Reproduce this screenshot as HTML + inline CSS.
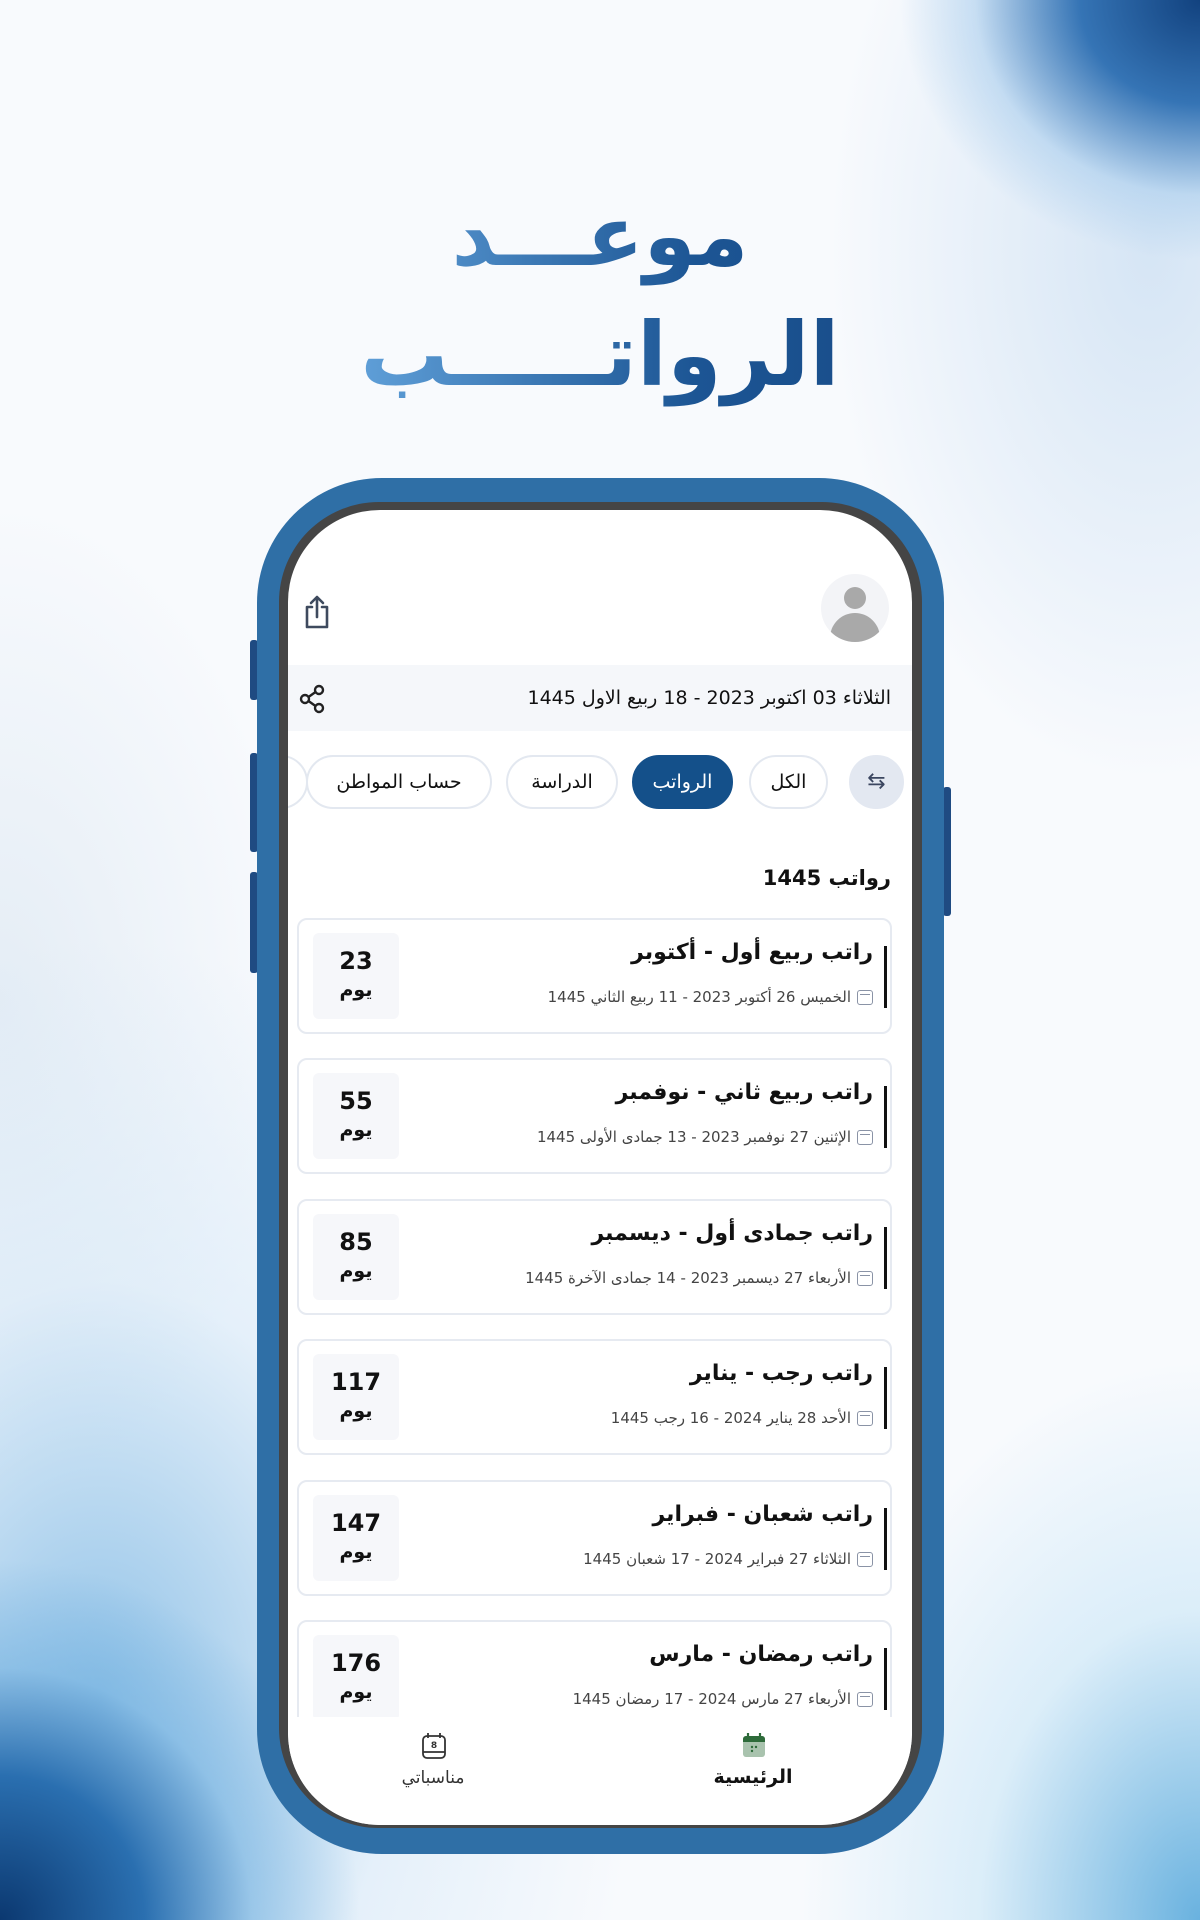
<!DOCTYPE html>
<html><head><meta charset="utf-8"><style>
*{margin:0;padding:0;box-sizing:border-box}
body{width:1200px;height:1920px;overflow:hidden;position:relative;font-family:"DejaVu Sans","Liberation Sans",sans-serif;
background:
radial-gradient(ellipse 300px 260px at 1200px 0px,#12427f 0%,#3574b5 40%,rgba(160,200,235,0.5) 75%,rgba(255,255,255,0) 100%),
radial-gradient(ellipse 460px 760px at 1150px 250px,rgba(185,212,238,0.55) 0%,rgba(255,255,255,0) 70%),
radial-gradient(ellipse 360px 360px at 0px 1920px,#0b3870 0%,#2a6fb0 40%,rgba(120,180,225,0.6) 70%,rgba(255,255,255,0) 100%),
radial-gradient(ellipse 540px 760px at 100px 1700px,rgba(100,170,222,0.7) 0%,rgba(200,225,245,0.4) 55%,rgba(255,255,255,0) 100%),
radial-gradient(ellipse 400px 560px at 1200px 1920px,rgba(80,165,218,0.85) 0%,rgba(190,225,245,0.5) 55%,rgba(255,255,255,0) 100%),
radial-gradient(ellipse 300px 500px at 0px 1000px,rgba(215,228,240,0.6) 0%,rgba(255,255,255,0) 100%),
#f8fafd;}
.t{position:absolute;left:0;width:1200px;text-align:center;font-weight:bold;direction:rtl;
background:linear-gradient(90deg,#8cc8f2 0%,#5f9fd8 30%,#1c5594 58%,#133f78 100%);-webkit-background-clip:text;background-clip:text;color:transparent}
.phone{position:absolute;left:257px;top:478px;width:687px;height:1376px;border-radius:125px;background:#2f6fa6}
.bez{position:absolute;left:22px;top:24px;right:22px;bottom:26px;border-radius:100px;background:#454545}
.scr{position:absolute;left:31px;top:32px;width:624px;height:1315px;border-radius:92px;background:#fff;overflow:hidden;direction:rtl}
.btn{position:absolute;background:#1f4b82;border-radius:3px;width:8px}
.chip{position:absolute;top:245px;height:54px;border:2px solid #e3e8f0;border-radius:27px;font-size:19px;line-height:50px;text-align:center;color:#111;background:#fff}
.card{position:absolute;left:9px;width:595px;height:116px;border:2px solid #e6eaf1;border-radius:10px;background:#fff}
.day{position:absolute;left:14px;top:13px;width:86px;height:86px;background:#f6f7fa;border-radius:6px;text-align:center;color:#111;font-weight:bold}
.day b{display:block;font-size:24px;margin-top:14px}
.day span{display:block;font-size:19px;margin-top:4px}
.bar{position:absolute;right:3px;top:26px;width:3px;height:62px;background:#111}
.ttl{position:absolute;right:17px;top:20px;font-size:22px;font-weight:bold;color:#111;white-space:nowrap}
.sub{position:absolute;right:17px;top:68px;font-size:15px;color:#444;white-space:nowrap;display:flex;align-items:center;gap:6px}
.cal{width:16px;height:15px;border:1.5px solid #8a93a6;border-radius:3px;position:relative;display:inline-block}
.cal:after{content:"";position:absolute;left:2px;right:2px;top:3px;height:1px;background:#8a93a6}
</style></head><body>
<div class="t" style="top:186px;font-size:84px;line-height:100px">موعـــد</div>
<div class="t" style="top:303px;font-size:88px;line-height:104px">الرواتـــــب</div>

<div class="btn" style="left:250px;top:640px;height:60px"></div>
<div class="btn" style="left:250px;top:753px;height:99px"></div>
<div class="btn" style="left:250px;top:872px;height:101px"></div>
<div class="btn" style="left:943px;top:787px;height:129px"></div>
<div class="phone"><div class="bez"></div>
<div class="scr">
 <div style="position:absolute;right:23px;top:64px;width:68px;height:68px;border-radius:50%;background:#f3f4f7;overflow:hidden">
  <div style="position:absolute;left:23px;top:13px;width:22px;height:22px;border-radius:50%;background:#a9a9a9"></div>
  <div style="position:absolute;left:9px;top:39px;width:50px;height:34px;border-radius:25px 25px 0 0;background:#a9a9a9"></div>
 </div>
 <svg style="position:absolute;left:14px;top:84px" width="30" height="36" viewBox="0 0 30 36" fill="none" stroke="#3e4a5e" stroke-width="2.6" stroke-linecap="round" stroke-linejoin="round"><path d="M10 13H5v20h20V13h-5"/><path d="M15 23V3M9 9l6-6 6 6"/></svg>
 <div style="position:absolute;left:0;top:155px;width:624px;height:66px;background:#f5f7fa"></div>
 <div style="position:absolute;right:21px;top:155px;line-height:66px;font-size:19px;color:#111;white-space:nowrap">الثلاثاء 03 اكتوبر 2023 - 18 ربيع الاول 1445</div>
 <svg style="position:absolute;left:10px;top:174px" width="28" height="30" viewBox="0 0 28 30" fill="none" stroke="#222" stroke-width="2.4"><circle cx="21" cy="6" r="4"/><circle cx="7" cy="15" r="4"/><circle cx="21" cy="24" r="4"/><path d="M10.5 13l7-5M10.5 17l7 5"/></svg>
 <div class="chip" style="right:8px;width:55px;background:#e3e8f1;border-color:#e3e8f1;font-size:22px;color:#3b4660">⇆</div>
 <div class="chip" style="right:84px;width:79px">الكل</div>
 <div class="chip" style="right:179px;width:101px;background:#14508a;border-color:#14508a;color:#fff">الرواتب</div>
 <div class="chip" style="right:294px;width:112px">الدراسة</div>
 <div class="chip" style="right:420px;width:186px">حساب المواطن</div>
 <div class="chip" style="left:-80px;width:100px"></div>
 <div style="position:absolute;right:21px;top:356px;font-size:21px;font-weight:bold;color:#111">رواتب 1445</div>
 <div class="card" style="top:408px"><div class="day"><b>23</b><span>يوم</span></div><div class="bar"></div><div class="ttl">راتب ربيع أول - أكتوبر</div><div class="sub"><i class="cal"></i>الخميس 26 أكتوبر 2023 - 11 ربيع الثاني 1445</div></div>
 <div class="card" style="top:548px"><div class="day"><b>55</b><span>يوم</span></div><div class="bar"></div><div class="ttl">راتب ربيع ثاني - نوفمبر</div><div class="sub"><i class="cal"></i>الإثنين 27 نوفمبر 2023 - 13 جمادى الأولى 1445</div></div>
 <div class="card" style="top:689px"><div class="day"><b>85</b><span>يوم</span></div><div class="bar"></div><div class="ttl">راتب جمادى أول - ديسمبر</div><div class="sub"><i class="cal"></i>الأربعاء 27 ديسمبر 2023 - 14 جمادى الآخرة 1445</div></div>
 <div class="card" style="top:829px"><div class="day"><b>117</b><span>يوم</span></div><div class="bar"></div><div class="ttl">راتب رجب - يناير</div><div class="sub"><i class="cal"></i>الأحد 28 يناير 2024 - 16 رجب 1445</div></div>
 <div class="card" style="top:970px"><div class="day"><b>147</b><span>يوم</span></div><div class="bar"></div><div class="ttl">راتب شعبان - فبراير</div><div class="sub"><i class="cal"></i>الثلاثاء 27 فبراير 2024 - 17 شعبان 1445</div></div>
 <div class="card" style="top:1110px"><div class="day"><b>176</b><span>يوم</span></div><div class="bar"></div><div class="ttl">راتب رمضان - مارس</div><div class="sub"><i class="cal"></i>الأربعاء 27 مارس 2024 - 17 رمضان 1445</div></div>
 <div style="position:absolute;left:0;top:1207px;width:624px;height:120px;background:#fff"></div>
 <svg style="position:absolute;left:454px;top:1222px" width="24" height="26" viewBox="0 0 24 26"><rect x="1" y="4" width="22" height="21" rx="3" fill="#a9c3ae"/><path d="M1 7a3 3 0 0 1 3-3h16a3 3 0 0 1 3 3v3H1z" fill="#2e6b3a"/><path d="M6 1v5M18 1v5" stroke="#2e6b3a" stroke-width="2.2"/><circle cx="10" cy="15" r="1.2" fill="#2e6b3a"/><circle cx="14" cy="15" r="1.2" fill="#2e6b3a"/><circle cx="10" cy="19" r="1.2" fill="#2e6b3a"/></svg>
 <div style="position:absolute;left:400px;width:130px;top:1256px;text-align:center;font-size:19px;font-weight:bold;color:#111">الرئيسية</div>
 <svg style="position:absolute;left:133px;top:1222px" width="26" height="28" viewBox="0 0 26 28" fill="none" stroke="#333" stroke-width="1.8"><rect x="2" y="4" width="22" height="22" rx="4"/><path d="M7 1v5M19 1v5M2 20h22"/><text x="13" y="16" font-size="9" font-family="DejaVu Sans" fill="#333" stroke="none" text-anchor="middle" font-weight="bold">8</text></svg>
 <div style="position:absolute;left:80px;width:130px;top:1258px;text-align:center;font-size:17px;color:#333">مناسباتي</div>
</div></div>
</body></html>
